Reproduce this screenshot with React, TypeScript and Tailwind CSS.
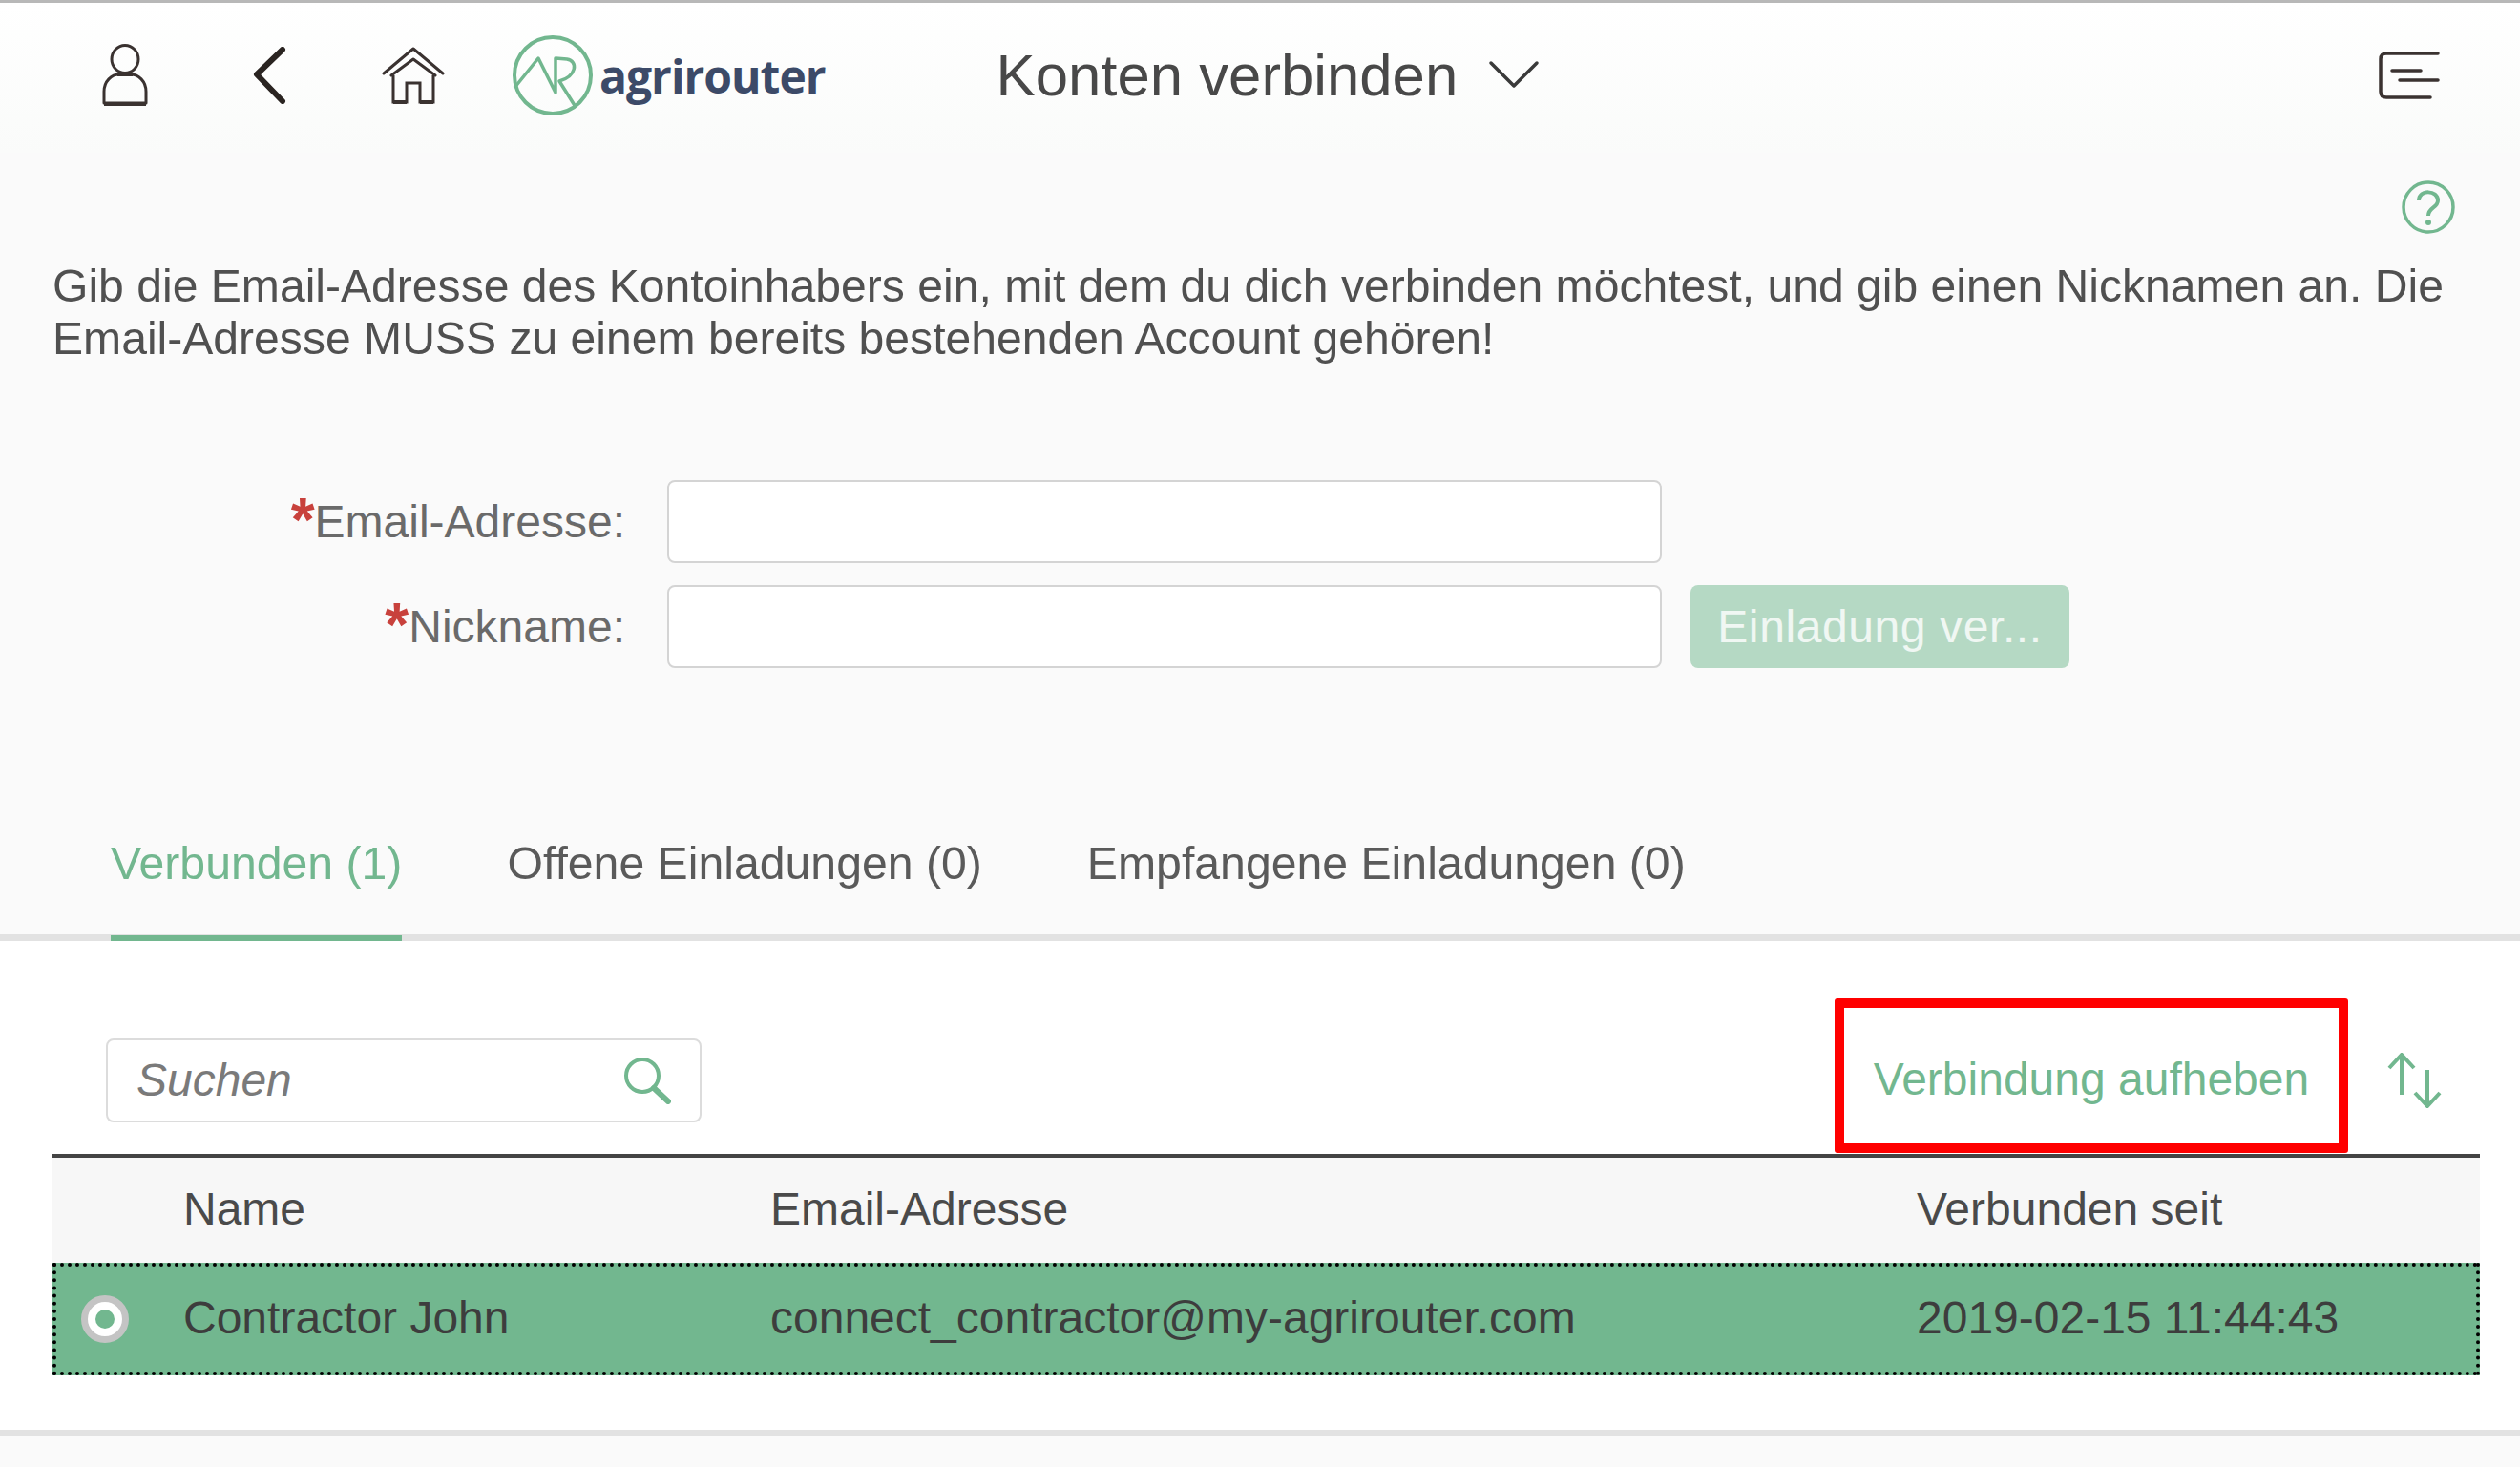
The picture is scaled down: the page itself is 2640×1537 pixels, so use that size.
import React from "react";

const font = "font-['Liberation_Sans',Arial,sans-serif]";

const UserIcon = () => (
  <svg width="52" height="66" viewBox="0 0 52 66" fill="none" stroke="#3a3230" strokeWidth="3">
    <ellipse cx="26" cy="16" rx="14" ry="14.5" />
    <path d="M4 62V50C4 39 12 32 20 32H32C40 32 48 39 48 50V62Z" strokeLinejoin="round" />
    <path d="M4 63H48M18 32H34" strokeWidth="4" />
  </svg>
);

const BackIcon = () => (
  <svg width="38" height="60" viewBox="0 0 38 60" fill="none" stroke="#2a2421" strokeWidth="6" strokeLinecap="round" strokeLinejoin="round">
    <path d="M33 3L6 29L33 57" />
  </svg>
);

const HomeIcon = () => (
  <svg width="66" height="60" viewBox="0 0 66 60" fill="none" stroke="#3a3230" strokeWidth="3">
    <path d="M2 28L33 2L64 28M10 30L33 13L56 30" strokeLinecap="round" strokeLinejoin="round" />
    <path d="M12 30V58H26V38H40V58H54V30" />
    <path d="M12 58H26M40 58H54" strokeWidth="4" />
  </svg>
);

const Logo = () => (
  <div className="flex items-center gap-[6px]">
    <svg width="86" height="86" viewBox="0 0 86 86" fill="none" stroke="#72b78f" strokeWidth="4">
      <circle cx="43" cy="43" r="40" />
      <path d="M3 56L28 25L46 61V25L58 26C70 28 68 44 50 49L67 76" strokeWidth="3.5" strokeLinejoin="round" />
    </svg>
    <span className="font-['Open_Sans',sans-serif] text-[48px] leading-none font-bold tracking-[-1px] text-[#3c4a68] mt-[2px]">agrirouter</span>
  </div>
);

const TitleChevron = () => (
  <svg width="54" height="30" viewBox="0 0 54 30" fill="none" stroke="#3a3a3a" strokeWidth="3.5" strokeLinecap="round" strokeLinejoin="round">
    <path d="M3 3L27 27L51 3" />
  </svg>
);

const MenuIcon = () => (
  <svg width="64" height="50" viewBox="0 0 64 50" fill="none" stroke="#3a3230" strokeWidth="3.5" strokeLinecap="round">
    <path d="M62 2H8C4 2 2 4 2 8V42C2 46 4 48 8 48H54" />
    <path d="M14 20H44M22 30H62" />
  </svg>
);

const HelpIcon = () => (
  <svg width="56" height="56" viewBox="0 0 56 56" fill="none" stroke="#72b78f" strokeWidth="3.5">
    <circle cx="28" cy="28" r="26" />
    <path d="M18 21C18 9 38 10 38 21C38 29 28 28 28 37" strokeWidth="4" />
    <circle cx="28" cy="44" r="3" fill="#72b78f" stroke="none" />
  </svg>
);

const SearchIcon = () => (
  <svg width="50" height="50" viewBox="0 0 50 50" fill="none" stroke="#72b78f" strokeWidth="4">
    <ellipse cx="20" cy="20" rx="17" ry="17" />
    <path d="M32 33L47 47" strokeWidth="6" strokeLinecap="round" />
  </svg>
);

const SortIcon = () => (
  <svg width="60" height="58" viewBox="0 0 60 58" fill="none" stroke="#72b78f" strokeWidth="4">
    <path d="M16 2V44M3 16L16 2L29 16" />
    <path d="M43 18V56M30 42L43 56L56 42" />
  </svg>
);

const FormRow = ({ label, children }: { label: string; children?: React.ReactNode }) => (
  <div className="flex items-center h-[87px]">
    <label className="w-[655px] text-right text-[48px] text-[#6a6a6a] whitespace-nowrap">
      <span className="text-[#c8413c] text-[64px] font-bold leading-none align-[-4px]">*</span>
      {label}:
    </label>
    <input className="ml-[44px] w-[1042px] h-[87px] bg-white border-2 border-[#d4d4d4] rounded-[8px]" />
    {children}
  </div>
);

export default function App() {
  const tabs = [
    { label: "Verbunden (1)", active: true },
    { label: "Offene Einladungen (0)", active: false },
    { label: "Empfangene Einladungen (0)", active: false },
  ];

  return (
    <div className={`${font} w-[2640px] h-[1537px] overflow-hidden bg-[#fafafa] flex flex-col`}>
      <div className="h-[3px] bg-[#b8b8b8]" />
      <header className="h-[157px] flex items-center pl-[105px] pr-[84px] pb-[6px] bg-gradient-to-b from-white to-[#fafbfa]">
        <UserIcon />
        <div className="ml-[106px]"><BackIcon /></div>
        <div className="ml-[99px]"><HomeIcon /></div>
        <div className="ml-[70px]"><Logo /></div>
        <div className="ml-[179px] flex items-center gap-[32px]">
          <span className="text-[61.7px] text-[#484848] leading-none">Konten verbinden</span>
          <TitleChevron />
        </div>
        <div className="ml-auto"><MenuIcon /></div>
      </header>

      <main className="flex-1 flex flex-col">
        <div className="flex justify-end pr-[68px] pt-[29px]">
          <HelpIcon />
        </div>
        <p className="mx-[55px] mt-[27px] w-[2530px] text-[48.1px] leading-[55px] text-[#505050]">
          Gib die Email-Adresse des Kontoinhabers ein, mit dem du dich verbinden möchtest, und gib einen Nicknamen an. Die Email-Adresse MUSS zu einem bereits bestehenden Account gehören!
        </p>

        <div className="mt-[121px] flex flex-col gap-[23px]">
          <FormRow label="Email-Adresse" />
          <FormRow label="Nickname">
            <button className="ml-[30px] w-[397px] h-[87px] rounded-[8px] bg-[#b5d9c4] text-white/80 text-[48px] tracking-[0.6px] whitespace-nowrap">Einladung ver...</button>
          </FormRow>
        </div>

        <nav className="mt-[166px] h-[120px] flex pl-[116px] gap-[110px] border-b-[7px] border-[#e2e2e2]">
          {tabs.map((tab) => (
            <div
              key={tab.label}
              className={
                tab.active
                  ? "h-[120px] flex items-center pb-[38px] text-[48.2px] text-[#72b78f] border-b-[6px] border-[#72b78f] whitespace-nowrap"
                  : "h-[120px] flex items-center pb-[44px] text-[48.2px] text-[#5a5a5a] whitespace-nowrap"
              }
            >
              {tab.label}
            </div>
          ))}
        </nav>

        <section className="bg-white h-[519px] border-b-[7px] border-[#e2e2e2] pl-[55px] pr-[42px]">
          <div className="h-[223px] flex items-end pl-[56px]">
            <div className="w-[624px] h-[88px] mb-[33px] bg-white border-2 border-[#dcdcdc] rounded-[8px] flex items-center justify-between pl-[30px] pr-[30px]">
              <span className="italic text-[48px] text-[#7a7a7a]">Suchen</span>
              <SearchIcon />
            </div>
            <button className="ml-[1187px] mb-[1px] w-[538px] h-[162px] border-[10px] border-[#ff0000] rounded-[3px] pt-[8px] flex items-center justify-center text-[48px] text-[#72b78f] whitespace-nowrap">
              Verbindung aufheben
            </button>
            <div className="ml-[40px] mb-[48px]"><SortIcon /></div>
          </div>
          <div className="border-t-[4px] border-[#444]">
            <div className="h-[110px] bg-[#f7f7f7] pb-[3px] flex items-center text-[48px] text-[#4a4a4a]">
              <span className="ml-[137px] w-[615px]">Name</span>
              <span className="w-[1201px]">Email-Adresse</span>
              <span>Verbunden seit</span>
            </div>
            <div className="h-[118px] bg-[#72b78f] border-[4px] border-dotted border-black flex items-center text-[48px] text-[#3d3d3d]">
              <span className="ml-[26px] w-[50px] h-[50px] rounded-full border-[7px] border-[#c4c4c4] bg-white flex items-center justify-center shrink-0">
                <span className="w-[20px] h-[20px] rounded-full bg-[#72b78f]" />
              </span>
              <span className="ml-[57px] w-[615px] pb-[3px] whitespace-nowrap">Contractor John</span>
              <span className="w-[1201px] pb-[3px] whitespace-nowrap">connect_contractor@my-agrirouter.com</span>
              <span className="pb-[3px] whitespace-nowrap">2019-02-15 11:44:43</span>
            </div>
          </div>
        </section>
      </main>
    </div>
  );
}
